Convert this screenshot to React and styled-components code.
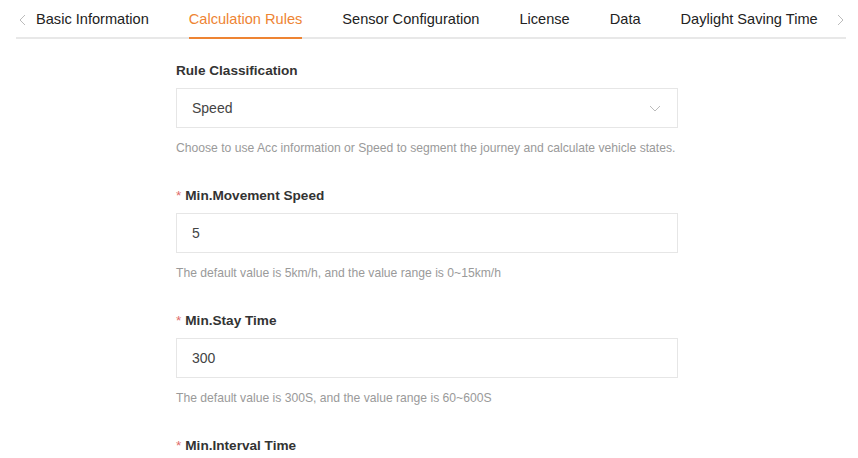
import React from 'react';
import styled, { createGlobalStyle } from 'styled-components';

const Global = createGlobalStyle`
  body {
    margin: 0;
    background: #fff;
    font-family: "Liberation Sans", Arial, sans-serif;
  }
`
const Page = styled.div`
  width: 858px;
  height: 458px;
  overflow: hidden;
`
const TabBar = styled.div`
  display: flex;
  align-items: center;
  margin: 0 12px 0 16px;
  height: 39px;
  border-bottom: 2px solid #e8e8e8;
  box-sizing: border-box;
`
const Arrow = styled.span`
  display: flex;
  align-items: center;
  justify-content: center;
  width: 12px;
  height: 37px;
  padding-top: 2px;
  box-sizing: border-box;
  color: #bbb;
  flex-shrink: 0;
`
const Tabs = styled.div`
  display: flex;
  gap: 40px;
  flex: 1;
  padding-left: 8px;
  padding-right: 8px;
`
const Tab = styled.div`
  position: relative;
  font-size: 14.6px;
  line-height: 36px;
  padding-top: 1px;
  white-space: nowrap;
  color: ${p => p.active ? '#ee8433' : '#222'};
  &::after {
    content: '';
    display: ${p => p.active ? 'block' : 'none'};
    position: absolute;
    left: 0;
    right: 0;
    bottom: -2px;
    height: 2px;
    background: #ee8433;
  }
`
const Form = styled.div`
  width: 502px;
  margin: 21px 0 0 176px;
`
const Item = styled.div`
  margin-bottom: 27px;
`
const Label = styled.div`
  font-size: 13.6px;
  line-height: 22px;
  font-weight: bold;
  color: #333;
  margin-bottom: 6px;
`
const Star = styled.span`
  color: #e06b6b;
  font-weight: normal;
  margin-right: 4px;
`
const Box = styled.div`
  display: flex;
  align-items: center;
  justify-content: space-between;
  height: 40px;
  box-sizing: border-box;
  border: 1px solid #e6e6e6;
  padding: 0 16px 0 15px;
  font-size: 14px;
  color: #444;
`
const Help = styled.div`
  margin-top: 10px;
  font-size: 12.15px;
  line-height: 20px;
  color: #9a9a9a;
`

const Chevron = ({ dir }) => {
  const d = dir === 'left' ? 'M7 1 L2 6 L7 11' : dir === 'right' ? 'M2 1 L7 6 L2 11' : 'M1 2 L6 7 L11 2';
  const w = dir === 'down' ? 12 : 9;
  const h = dir === 'down' ? 9 : 12;
  return (
    <svg width={w} height={h} viewBox={`0 0 ${w} ${h}`} fill="none" stroke="#bbb" strokeWidth="1">
      <path d={d} />
    </svg>
  );
}

const tabs = ['Basic Information', 'Calculation Rules', 'Sensor Configuration', 'License', 'Data', 'Daylight Saving Time'];

function App() {
  return (
    <Page>
      <Global />
      <TabBar>
        <Arrow><Chevron dir="left" /></Arrow>
        <Tabs>
          {tabs.map(t => <Tab key={t} active={t === 'Calculation Rules'}>{t}</Tab>)}
        </Tabs>
        <Arrow><Chevron dir="right" /></Arrow>
      </TabBar>
      <Form>
        <Item>
          <Label>Rule Classification</Label>
          <Box>Speed<Chevron dir="down" /></Box>
          <Help>Choose to use Acc information or Speed to segment the journey and calculate vehicle states.</Help>
        </Item>
        <Item>
          <Label><Star>*</Star>Min.Movement Speed</Label>
          <Box>5</Box>
          <Help>The default value is 5km/h, and the value range is 0~15km/h</Help>
        </Item>
        <Item>
          <Label><Star>*</Star>Min.Stay Time</Label>
          <Box>300</Box>
          <Help>The default value is 300S, and the value range is 60~600S</Help>
        </Item>
        <Item>
          <Label><Star>*</Star>Min.Interval Time</Label>
          <Box>60</Box>
        </Item>
      </Form>
    </Page>
  );
}

export default App;
